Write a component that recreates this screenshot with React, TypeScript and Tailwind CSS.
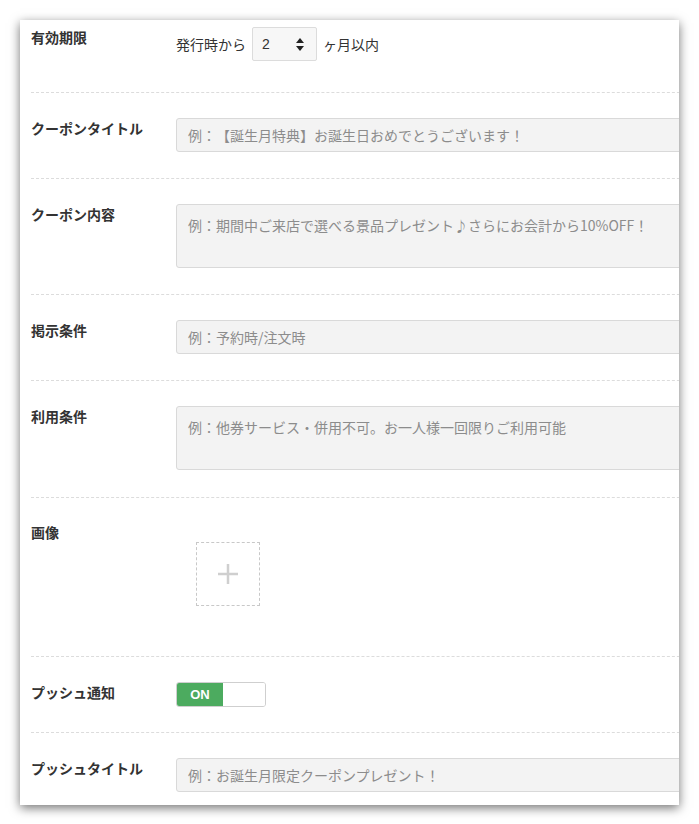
import React from "react";

const font = "font-['Noto_Sans_CJK_JP',sans-serif] [text-spacing-trim:space-all]";

const Label = ({ children }: { children: React.ReactNode }) => (
  <div className="w-[145px] shrink-0 text-[14px] leading-[20px] font-bold text-[#333]">
    {children}
  </div>
);

const TextBox = ({ text, tall }: { text: string; tall?: boolean }) => (
  <div
    className={`w-[540px] rounded-[3px] border border-[#d9d9d9] bg-[#f3f3f3] px-[11px] text-[14px] text-[#8c8c8c] ${
      tall ? "h-[64px] pt-[10px] leading-[20px]" : "flex h-[34px] items-center"
    }`}
  >
    {text}
  </div>
);

const Row = ({
  label,
  children,
  className = "pt-[25px] pb-[26px]",
}: {
  label: string;
  children: React.ReactNode;
  className?: string;
}) => (
  <div className={`flex border-b border-dashed border-[#dcdcdc] ${className}`}>
    <Label>{label}</Label>
    <div>{children}</div>
  </div>
);

export default function App() {
  return (
    <div className={`min-h-[824px] bg-white pl-[20px] pt-[20px] ${font}`}>
      <div className="h-[785px] w-[659px] overflow-hidden bg-white shadow-[0_3px_10px_rgba(0,0,0,0.55)]">
        <div className="w-[740px] pl-[11px]">
          {/* 有効期限 */}
          <Row label="有効期限" className="pt-[7px] pb-[31px]">
            <div className="flex h-[34px] items-center text-[14px] text-[#333]">
              <span>発行時から</span>
              <div className="ml-[6px] mr-[6px] flex h-[34px] w-[65px] items-center justify-between rounded-[2px] border border-[#dcdcdc] bg-[#f7f7f7] pl-[9px] pr-[12px]">
                <span className="font-['Liberation_Sans',sans-serif] text-[14px] text-[#333]">2</span>
                <svg width="8" height="13" viewBox="0 0 8 13">
                  <path d="M4 0 L8 5 L0 5 Z" fill="#222" />
                  <path d="M0 8 L8 8 L4 13 Z" fill="#222" />
                </svg>
              </div>
              <span>ヶ月以内</span>
            </div>
          </Row>

          <Row label="クーポンタイトル">
            <TextBox text="例：【誕生月特典】お誕生日おめでとうございます！" />
          </Row>

          <Row label="クーポン内容">
            <TextBox tall text="例：期間中ご来店で選べる景品プレゼント♪さらにお会計から10%OFF！" />
          </Row>

          <Row label="掲示条件">
            <TextBox text="例：予約時/注文時" />
          </Row>

          <Row label="利用条件" className="pt-[25px] pb-[27px]">
            <TextBox tall text="例：他券サービス・併用不可。お一人様一回限りご利用可能" />
          </Row>

          {/* 画像 */}
          <Row label="画像" className="pt-[24px] pb-[50px]">
            <div className="ml-[20px] mt-[20px] flex h-[64px] w-[64px] items-center justify-center border border-dashed border-[#c8c8c8]">
              <svg width="22" height="22" viewBox="0 0 22 22">
                <path d="M11 1 V21 M1 11 H21" stroke="#cfcfcf" strokeWidth="2.5" />
              </svg>
            </div>
          </Row>

          {/* プッシュ通知 */}
          <Row label="プッシュ通知" className="pt-[25px] pb-[25px]">
            <div className="flex h-[25px] w-[90px] overflow-hidden rounded-[3px] border border-[#cfcfcf]">
              <div className="flex w-[46px] items-center justify-center bg-[#4cab5f] font-['Liberation_Sans',sans-serif] text-[13px] font-bold text-white">
                ON
              </div>
              <div className="flex-1 bg-white" />
            </div>
          </Row>

          <div className="flex pt-[25px]">
            <Label>プッシュタイトル</Label>
            <TextBox text="例：お誕生月限定クーポンプレゼント！" />
          </div>
        </div>
      </div>
    </div>
  );
}
